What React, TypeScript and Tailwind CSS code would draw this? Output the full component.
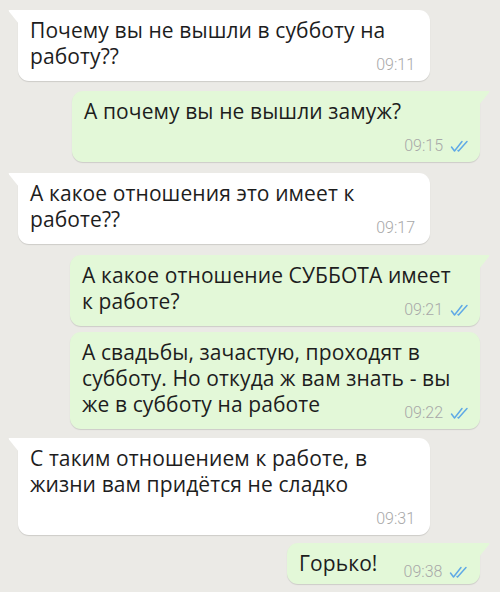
type Side = 'in' | 'out';
type TimeMode = 'overlap' | 'below' | 'inline';

interface Message {
  id: number;
  side: Side;
  lines: string[];
  time: string;
  width: string;
  timeMode: TimeMode;
  tail: boolean;
  gap: string;
}

const MESSAGES: Message[] = [
  {
    id: 1,
    side: 'in',
    lines: ['Почему вы не вышли в субботу на', 'работу??'],
    time: '09:11',
    width: 'w-[412px]',
    timeMode: 'overlap',
    tail: true,
    gap: 'mt-0',
  },
  {
    id: 2,
    side: 'out',
    lines: ['А почему вы не вышли замуж?'],
    time: '09:15',
    width: 'w-[408px]',
    timeMode: 'below',
    tail: true,
    gap: 'mt-[10px]',
  },
  {
    id: 3,
    side: 'in',
    lines: ['А какое отношения это имеет к', 'работе??'],
    time: '09:17',
    width: 'w-[412px]',
    timeMode: 'overlap',
    tail: true,
    gap: 'mt-[11px]',
  },
  {
    id: 4,
    side: 'out',
    lines: ['А какое отношение СУББОТА имеет', 'к работе?'],
    time: '09:21',
    width: 'w-[410px]',
    timeMode: 'overlap',
    tail: true,
    gap: 'mt-[11px]',
  },
  {
    id: 5,
    side: 'out',
    lines: ['А свадьбы, зачастую, проходят в', 'субботу. Но откуда ж вам знать - вы', 'же в субботу на работе'],
    time: '09:22',
    width: 'w-[410px]',
    timeMode: 'overlap',
    tail: false,
    gap: 'mt-[6px]',
  },
  {
    id: 6,
    side: 'in',
    lines: ['С таким отношением к работе, в', 'жизни вам придётся не сладко'],
    time: '09:31',
    width: 'w-[412px]',
    timeMode: 'below',
    tail: true,
    gap: 'mt-[9px]',
  },
  {
    id: 7,
    side: 'out',
    lines: ['Горько!'],
    time: '09:38',
    width: 'w-[193px]',
    timeMode: 'inline',
    tail: true,
    gap: 'mt-[8px]',
  },
];

function DoubleTick() {
  return (
    <svg
      width="20"
      height="13"
      viewBox="0 0 20 13"
      fill="none"
      stroke="#5fa9e6"
      strokeWidth="1.5"
      strokeLinecap="round"
      strokeLinejoin="round"
      aria-hidden="true"
    >
      <path d="M1.5 7 L4.5 11 L12 1.5" />
      <path d="M8 10.5 L8.5 11 L17 1.5" />
    </svg>
  );
}

function Tail({ side, color }: { side: Side; color: string }) {
  if (side === 'in') {
    return (
      <svg
        className="absolute top-0 -left-[10px]"
        width="11"
        height="14"
        viewBox="0 0 11 14"
        aria-hidden="true"
      >
        <path d="M11 0 H1.5 Q0 0 1 1.4 L11 14 Z" fill={color} />
      </svg>
    );
  }
  return (
    <svg
      className="absolute top-0 -right-[10px]"
      width="11"
      height="14"
      viewBox="0 0 11 14"
      aria-hidden="true"
    >
      <path d="M0 0 H9.5 Q11 0 10 1.4 L0 14 Z" fill={color} />
    </svg>
  );
}

function Time({ msg }: { msg: Message }) {
  return (
    <span className="flex items-center gap-[7px] h-4 text-[16px] leading-4 font-light text-[#a8a8a8] font-['Roboto',sans-serif]">
      {msg.time}
      {msg.side === 'out' && <DoubleTick />}
    </span>
  );
}

function Bubble({ msg }: { msg: Message }) {
  const isOut = msg.side === 'out';
  const bg = isOut ? '#e3f8d8' : '#ffffff';

  return (
    <div className={`flex ${isOut ? 'justify-end' : 'justify-start'} ${msg.gap}`}>
      <div
        className={`relative ${msg.width} rounded-[11px] shadow-[0_1px_1px_rgba(0,0,0,0.13)] ${
          isOut ? 'bg-[#e3f8d8]' : 'bg-white'
        } ${msg.tail ? (isOut ? 'rounded-tr-none' : 'rounded-tl-none') : ''} ${
          isOut ? 'pl-3 pr-[10px]' : 'pl-3 pr-[15px]'
        } pt-[7px] pb-[8px]`}
      >
        {msg.tail && <Tail side={msg.side} color={bg} />}

        {msg.timeMode === 'inline' ? (
          <div className="flex items-end gap-[26px]">
            <p className="text-[21px] leading-[26px] tracking-[0.1px]">{msg.lines[0]}</p>
            <div className="translate-y-[4px]">
              <Time msg={msg} />
            </div>
          </div>
        ) : (
          <>
            <p className="text-[21px] leading-[26px] tracking-[0.1px] whitespace-nowrap">
              {msg.lines.map((line, i) => (
                <span key={i}>
                  {line}
                  {i < msg.lines.length - 1 && <br />}
                </span>
              ))}
            </p>
            <div
              className={`flex justify-end ${
                msg.timeMode === 'overlap' ? '-mt-[12px]' : 'mt-[14px]'
              }`}
            >
              <Time msg={msg} />
            </div>
          </>
        )}
      </div>
    </div>
  );
}

export default function App() {
  return (
    <div className="w-[500px] h-[592px] overflow-hidden bg-[#ebeae6] pt-[10px] pl-[18px] pr-[20px] font-['Open_Sans',sans-serif] text-[#1d1d1d]">
      {MESSAGES.map((msg) => (
        <Bubble key={msg.id} msg={msg} />
      ))}
    </div>
  );
}
